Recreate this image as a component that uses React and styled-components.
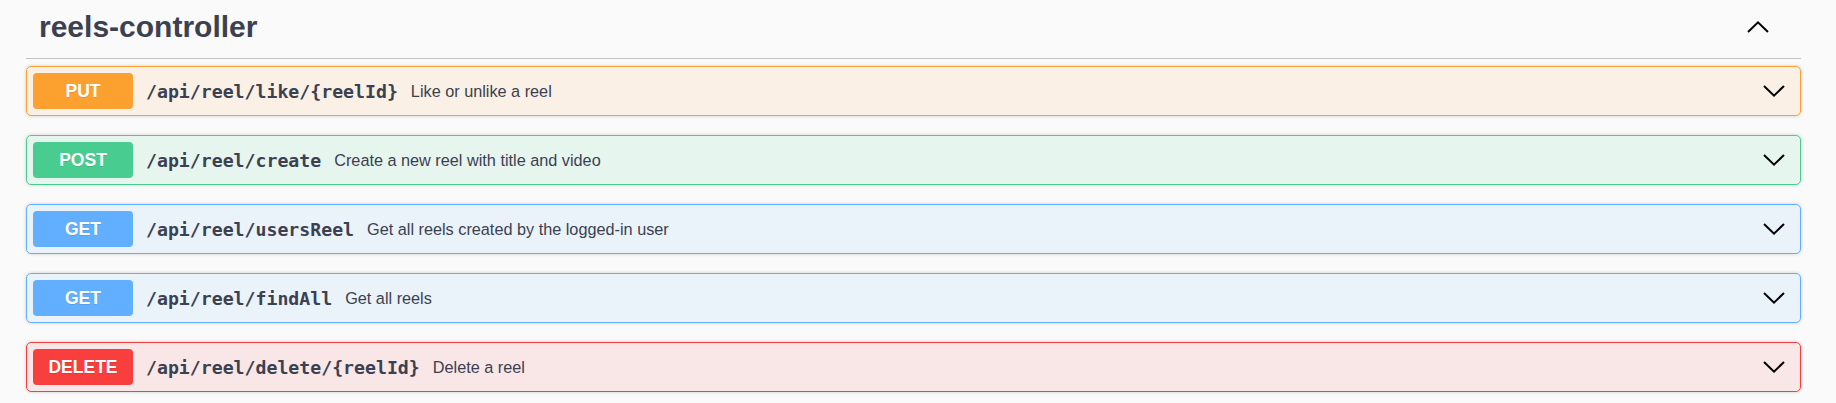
import styled, { createGlobalStyle } from "styled-components";

const GlobalStyle = createGlobalStyle`
  html, body {
    margin: 0;
    padding: 0;
    background: #fafafa;
  }
  body {
    font-family: "Liberation Sans", Arial, sans-serif;
    color: #3b4151;
  }
`;

const METHOD_COLORS = {
  PUT: "252, 161, 48",
  POST: "73, 204, 144",
  GET: "97, 175, 254",
  DELETE: "249, 62, 62",
};

const operations = [
  { method: "PUT", path: "/api/reel/like/{reelId}", summary: "Like or unlike a reel" },
  { method: "POST", path: "/api/reel/create", summary: "Create a new reel with title and video" },
  { method: "GET", path: "/api/reel/usersReel", summary: "Get all reels created by the logged-in user" },
  { method: "GET", path: "/api/reel/findAll", summary: "Get all reels" },
  { method: "DELETE", path: "/api/reel/delete/{reelId}", summary: "Delete a reel" },
];

const Page = styled.div`
  padding: 0 35px 0 26px;
  height: 403px;
  box-sizing: border-box;
  overflow: hidden;
`;

const TagHeader = styled.div`
  display: flex;
  align-items: center;
  height: 59px;
  box-sizing: border-box;
  padding: 0 25px 4px 13px;
  border-bottom: 1px solid rgba(59, 65, 81, 0.3);
`;

const TagTitle = styled.h3`
  flex: 1;
  margin: 0;
  font-size: 30px;
  font-weight: 700;
  color: #3b4151;
`;

const ExpandButton = styled.button`
  display: flex;
  align-items: center;
  background: none;
  border: none;
  padding: 0;
  margin: 0 7px 1px 0;
  cursor: pointer;
  color: #000;
`;

const OpList = styled.div`
  display: flex;
  flex-direction: column;
  gap: 19px;
  margin-top: 7px;
`;

const OpBlock = styled.div`
  border: 1px solid rgb(${(p) => p.$rgb});
  background: rgba(${(p) => p.$rgb}, 0.1);
  border-radius: 5px;
  box-shadow: 0 0 3.75px rgba(0, 0, 0, 0.19);
`;

const Summary = styled.div`
  display: flex;
  align-items: center;
  padding: 6px 15px 6px 6px;
  height: 48px;
  box-sizing: border-box;
  cursor: pointer;
`;

const MethodBadge = styled.span`
  display: flex;
  align-items: center;
  justify-content: center;
  min-width: 100px;
  height: 36px;
  border-radius: 4px;
  background: rgb(${(p) => p.$rgb});
  color: #fff;
  font-size: 17.5px;
  font-weight: 700;
  text-shadow: 0 1px 0 rgba(0, 0, 0, 0.1);
`;

const Path = styled.span`
  padding: 0 13px 0 13px;
  font-family: "DejaVu Sans Mono", "Liberation Mono", monospace;
  font-size: 18.2px;
  font-weight: 700;
  color: #3b4151;
`;

const Description = styled.span`
  flex: 1;
  font-size: 16.25px;
  color: #3b4151;
`;

const ChevronIcon = ({ up }) => (
  <svg width="22" height="12" viewBox="0 0 22 12" fill="none" stroke="currentColor" strokeWidth="2">
    <polyline points={up ? "1,11 11,1.4 21,11" : "1,1 11,10.6 21,1"} />
  </svg>
);

const ArrowBox = styled.span`
  display: flex;
  align-items: center;
  color: #000;
`;

function Operation({ method, path, summary }) {
  const rgb = METHOD_COLORS[method];
  return (
    <OpBlock $rgb={rgb}>
      <Summary>
        <MethodBadge $rgb={rgb}>{method}</MethodBadge>
        <Path>{path}</Path>
        <Description>{summary}</Description>
        <ArrowBox>
          <ChevronIcon />
        </ArrowBox>
      </Summary>
    </OpBlock>
  );
}

export default function App() {
  return (
    <>
      <GlobalStyle />
      <Page>
        <TagHeader>
          <TagTitle>reels-controller</TagTitle>
          <ExpandButton aria-label="Collapse">
            <ChevronIcon up />
          </ExpandButton>
        </TagHeader>
        <OpList>
          {operations.map((op) => (
            <Operation key={op.method + op.path} {...op} />
          ))}
        </OpList>
      </Page>
    </>
  );
}
